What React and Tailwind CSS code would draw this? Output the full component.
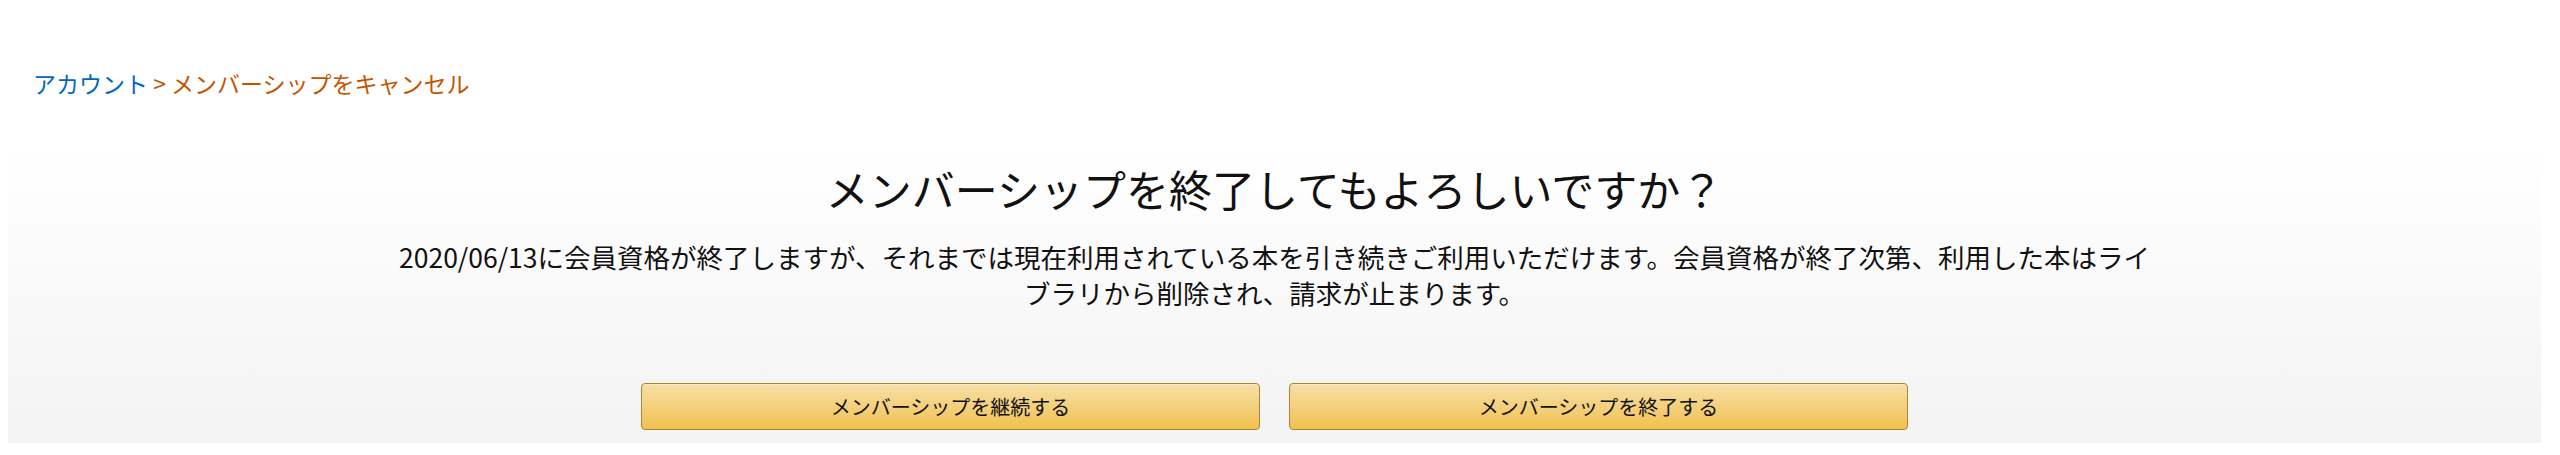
export default function App() {
    const font = { fontFamily: '"Noto Sans CJK JP", "Noto Sans", sans-serif' };

    return (
        <div className="w-full h-[455px] bg-white overflow-hidden" style={font}>
            {/* breadcrumb */}
            <div className="pt-[67px] pl-[33px] text-[23px] leading-[32px]">
                <a className="text-[#0066c0]">アカウント</a>
                <span className="text-[#c45500]"> &gt; </span>
                <span className="text-[#c45500]">メンバーシップをキャンセル</span>
            </div>

            {/* main panel */}
            <div className="mt-[49px] ml-[8px] w-[2533px] h-[295px] bg-gradient-to-b from-white to-[#f3f3f3] flex flex-col items-center">
                <h1 className="mt-[12px] text-[43px] leading-[56px] font-normal text-[#111]">
                    メンバーシップを終了してもよろしいですか？
                </h1>
                <p className="mt-[23px] max-w-[1766px] text-center text-[26.5px] leading-[36px] text-[#111]">
                    2020/06/13に会員資格が終了しますが、それまでは現在利用されている本を引き続きご利用いただけます。会員資格が終了次第、利用した本はライブラリから削除され、請求が止まります。
                </p>
                <div className="mt-[72px] flex gap-[29px]">
                    <button className="w-[619px] h-[47px] rounded-[4px] border border-[#a88734] bg-gradient-to-b from-[#f7dfa5] to-[#f0c14b] text-[20px] text-[#111] shadow-[inset_0_1px_0_rgba(255,255,255,0.4)]">
                        メンバーシップを継続する
                    </button>
                    <button className="w-[619px] h-[47px] rounded-[4px] border border-[#a88734] bg-gradient-to-b from-[#f7dfa5] to-[#f0c14b] text-[20px] text-[#111] shadow-[inset_0_1px_0_rgba(255,255,255,0.4)]">
                        メンバーシップを終了する
                    </button>
                </div>
            </div>
        </div>
    );
}
